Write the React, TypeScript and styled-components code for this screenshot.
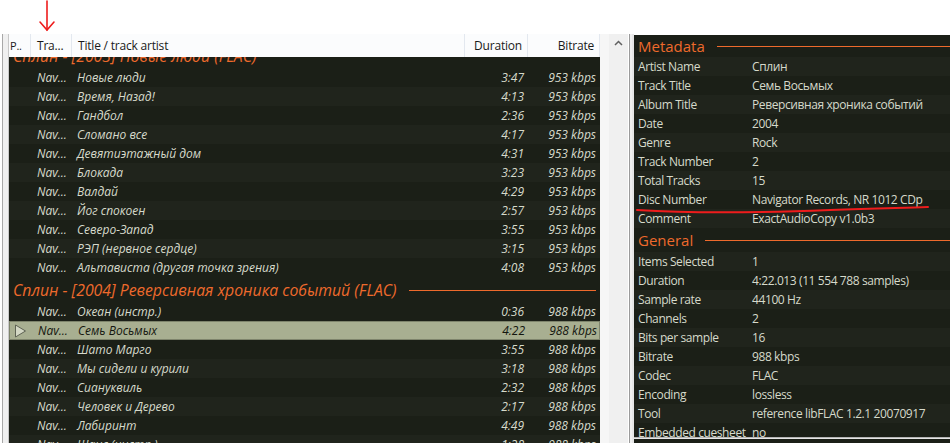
import React from "react";
import styled, { createGlobalStyle } from "styled-components";

const GlobalStyle = createGlobalStyle`
  html, body {
    margin: 0;
    padding: 0;
    background: #ffffff;
    overflow: hidden;
  }
  body {
    font-family: "Open Sans", "Noto Sans", sans-serif;
  }
`;

const ORANGE = "#ee6a2c";
const TEXT = "#d6dacb";
const DARK = "#1b1f17";
const DARK_ALT = "#20241c";

const Page = styled.div`
  position: relative;
  width: 950px;
  height: 443px;
  display: flex;
  flex-direction: column;
  background: #ffffff;
`;

const TopStrip = styled.div`
  height: 34px;
  flex: none;
`;

const Main = styled.div`
  flex: 1;
  display: flex;
  min-height: 0;
`;

const LeftFrame = styled.div`
  width: 5px;
  margin-left: 2px;
  flex: none;
  background: #f0f0f0;
  border-left: 1px solid #a8a8a8;
  border-right: 1px solid #c8c8c8;
`;

const ListPane = styled.div`
  width: 591px;
  flex: none;
  display: flex;
  flex-direction: column;
  background: ${DARK};
`;

const ListGap = styled.div`
  width: 9px;
  flex: none;
  background: #f6f6f6;
`;

const Scrollbar = styled.div`
  width: 19px;
  flex: none;
  background: #f0f0f0;
  display: flex;
  justify-content: center;
  padding-top: 6px;
  box-sizing: border-box;
`;

const Splitter = styled.div`
  width: 2px;
  margin-left: 1px;
  flex: none;
  background: #f0f0f0;
  border-left: 1px solid #9a9a9a;
  border-right: 2px solid #e6e6e6;
`;

const Columns = "22px 41px 393px 63px 72px";

const HeaderRow = styled.div`
  height: 23px;
  flex: none;
  display: grid;
  grid-template-columns: ${Columns};
  background: #fbfcfd;
  font-size: 12px;
  letter-spacing: -0.2px;
  color: #1a1a1a;
`;

const HeaderCell = styled.div<{ $right?: boolean }>`
  display: flex;
  align-items: center;
  justify-content: ${(p) => (p.$right ? "flex-end" : "flex-start")};
  padding: 0 ${(p) => (p.$right ? "5px" : "0")} 0 ${(p) => (p.$right ? "0" : "6px")};
  border-right: 1px solid #e3e8ef;
  white-space: nowrap;
  overflow: hidden;
  &:first-child {
    padding-left: 1px;
    font-size: 11px;
  }
`;

const ListBody = styled.div`
  flex: 1;
  overflow: hidden;
  min-height: 0;
`;

const ListScroll = styled.div`
  margin-top: -14px;
`;

const GroupRow = styled.div`
  height: 25px;
  display: flex;
  align-items: center;
  padding: 0 4px 0 4px;
  background: ${DARK};
  color: ${ORANGE};
  font-style: italic;
  font-size: 15.8px;
  white-space: nowrap;
`;

const GroupLine = styled.div`
  flex: 1;
  height: 1px;
  background: ${ORANGE};
  margin-left: 12px;
  margin-top: 2px;
`;

const TrackRow = styled.div<{ $alt?: boolean; $selected?: boolean }>`
  height: 19px;
  box-sizing: border-box;
  display: grid;
  grid-template-columns: ${Columns};
  align-items: center;
  font-style: italic;
  font-size: 12px;
  background: ${(p) => (p.$selected ? "#a8af91" : p.$alt ? DARK_ALT : DARK)};
  color: ${(p) => (p.$selected ? "#14160f" : TEXT)};
  border: ${(p) => (p.$selected ? "1px solid #7e846c" : "none")};
  white-space: nowrap;
`;

const Cell = styled.div<{ $right?: boolean; $pad?: number }>`
  overflow: hidden;
  text-align: ${(p) => (p.$right ? "right" : "left")};
  padding-left: ${(p) => (p.$right ? 0 : p.$pad ?? 5)}px;
  padding-right: ${(p) => (p.$right ? p.$pad ?? 4 : 0)}px;
`;

const PlayCell = styled.div`
  display: flex;
  align-items: center;
  padding-left: 4px;
`;

const InfoPane = styled.div`
  flex: 1;
  display: flex;
  flex-direction: column;
  margin-top: 1px;
  min-width: 0;
`;

const InfoPanel = styled.div`
  height: 402px;
  flex: none;
  overflow: hidden;
  background: ${DARK};
  padding-left: 4px;
  border-bottom: 1px solid #b4b4b4;
`;

const InfoBelow = styled.div`
  flex: 1;
  background: ${DARK};
  border-top: 1px solid #e6e6e6;
`;

const Heading = styled.div<{ $h: number }>`
  height: ${(p) => p.$h}px;
  display: flex;
  align-items: center;
  color: ${ORANGE};
  font-size: 15px;
  white-space: nowrap;
`;

const HeadingLine = styled.div`
  flex: 1;
  height: 1px;
  background: ${ORANGE};
  margin-left: 12px;
`;

const InfoRow = styled.div<{ $alt?: boolean }>`
  height: 19px;
  display: grid;
  grid-template-columns: 114px 1fr;
  align-items: center;
  font-size: 12px;
  letter-spacing: -0.4px;
  color: ${TEXT};
  margin-left: -4px;
  padding-left: 4px;
  background: ${(p) => (p.$alt ? DARK_ALT : DARK)};
  white-space: nowrap;
`;

const Annotation = styled.svg`
  position: absolute;
  left: 0;
  top: 0;
  pointer-events: none;
`;

type Track = { title: string; dur: string; rate: string; playing?: boolean };

const group1: Track[] = [
  { title: "Новые люди", dur: "3:47", rate: "953 kbps" },
  { title: "Время, Назад!", dur: "4:13", rate: "953 kbps" },
  { title: "Гандбол", dur: "2:36", rate: "953 kbps" },
  { title: "Сломано все", dur: "4:17", rate: "953 kbps" },
  { title: "Девятиэтажный дом", dur: "4:31", rate: "953 kbps" },
  { title: "Блокада", dur: "3:23", rate: "953 kbps" },
  { title: "Валдай", dur: "4:29", rate: "953 kbps" },
  { title: "Йог спокоен", dur: "2:57", rate: "953 kbps" },
  { title: "Северо-Запад", dur: "3:55", rate: "953 kbps" },
  { title: "РЭП (нервное сердце)", dur: "3:15", rate: "953 kbps" },
  { title: "Альтависта (другая точка зрения)", dur: "4:08", rate: "953 kbps" },
];

const group2: Track[] = [
  { title: "Океан (инстр.)", dur: "0:36", rate: "988 kbps" },
  { title: "Семь Восьмых", dur: "4:22", rate: "988 kbps", playing: true },
  { title: "Шато Марго", dur: "3:55", rate: "988 kbps" },
  { title: "Мы сидели и курили", dur: "3:18", rate: "988 kbps" },
  { title: "Сиануквиль", dur: "2:32", rate: "988 kbps" },
  { title: "Человек и Дерево", dur: "2:17", rate: "988 kbps" },
  { title: "Лабиринт", dur: "4:49", rate: "988 kbps" },
  { title: "Шанс (инстр.)", dur: "1:28", rate: "988 kbps" },
];

const metadata: [string, string][] = [
  ["Artist Name", "Сплин"],
  ["Track Title", "Семь Восьмых"],
  ["Album Title", "Реверсивная хроника событий"],
  ["Date", "2004"],
  ["Genre", "Rock"],
  ["Track Number", "2"],
  ["Total Tracks", "15"],
  ["Disc Number", "Navigator Records, NR 1012 CDp"],
  ["Comment", "ExactAudioCopy v1.0b3"],
];

const general: [string, string][] = [
  ["Items Selected", "1"],
  ["Duration", "4:22.013 (11 554 788 samples)"],
  ["Sample rate", "44100 Hz"],
  ["Channels", "2"],
  ["Bits per sample", "16"],
  ["Bitrate", "988 kbps"],
  ["Codec", "FLAC"],
  ["Encoding", "lossless"],
  ["Tool", "reference libFLAC 1.2.1 20070917"],
  ["Embedded cuesheet", "no"],
];

const PlayIcon = () => (
  <svg width="13" height="14" viewBox="0 0 13 14">
    <polygon points="1.5,1 11.5,7 1.5,13" fill="#d3d7c4" stroke="#5e6354" strokeWidth="1" strokeLinejoin="round" />
  </svg>
);

const TrackList = ({ tracks }: { tracks: Track[] }) => (
  <>
    {tracks.map((t, i) => (
      <TrackRow key={t.title} $alt={i % 2 === 1} $selected={t.playing}>
        <PlayCell>{t.playing && <PlayIcon />}</PlayCell>
        <Cell $pad={6}>Nav...</Cell>
        <Cell>{t.title}</Cell>
        <Cell $right $pad={4}>{t.dur}</Cell>
        <Cell $right $pad={4}>{t.rate}</Cell>
      </TrackRow>
    ))}
  </>
);

export default function App() {
  return (
    <Page>
      <GlobalStyle />
      <TopStrip />
      <Main>
        <LeftFrame />
        <ListPane>
          <HeaderRow>
            <HeaderCell>P..</HeaderCell>
            <HeaderCell>Tra...</HeaderCell>
            <HeaderCell>Title / track artist</HeaderCell>
            <HeaderCell $right>Duration</HeaderCell>
            <HeaderCell $right>Bitrate</HeaderCell>
          </HeaderRow>
          <ListBody>
            <ListScroll>
              <GroupRow>
                Сплин - [2003] Новые люди (FLAC)
                <GroupLine />
              </GroupRow>
              <TrackList tracks={group1} />
              <GroupRow>
                Сплин - [2004] Реверсивная хроника событий (FLAC)
                <GroupLine />
              </GroupRow>
              <TrackList tracks={group2} />
            </ListScroll>
          </ListBody>
        </ListPane>
        <ListGap />
        <Scrollbar>
          <svg width="9" height="6" viewBox="0 0 9 6">
            <polyline points="1,5 4.5,1.5 8,5" fill="none" stroke="#606060" strokeWidth="1.5" />
          </svg>
        </Scrollbar>
        <Splitter />
        <InfoPane>
          <InfoPanel>
            <Heading $h={22}>
              Metadata
              <HeadingLine />
            </Heading>
            {metadata.map(([k, v], i) => (
              <InfoRow key={k} $alt={i % 2 === 0}>
                <span>{k}</span>
                <span>{v}</span>
              </InfoRow>
            ))}
            <Heading $h={24}>
              General
              <HeadingLine />
            </Heading>
            {general.map(([k, v], i) => (
              <InfoRow key={k} $alt={i % 2 === 0}>
                <span>{k}</span>
                <span>{v}</span>
              </InfoRow>
            ))}
          </InfoPanel>
          <InfoBelow />
        </InfoPane>
      </Main>
      <Annotation width="950" height="443" viewBox="0 0 950 443">
        <g stroke="#ee1c1c" strokeWidth="1.6" fill="none" strokeLinecap="round">
          <line x1="47" y1="1" x2="47" y2="30" />
          <polyline points="40,22 47,30 54,22" />
          <path d="M637 210 C 700 214, 780 212, 830 210 S 905 208, 928 207" strokeWidth="2" />
        </g>
      </Annotation>
    </Page>
  );
}
